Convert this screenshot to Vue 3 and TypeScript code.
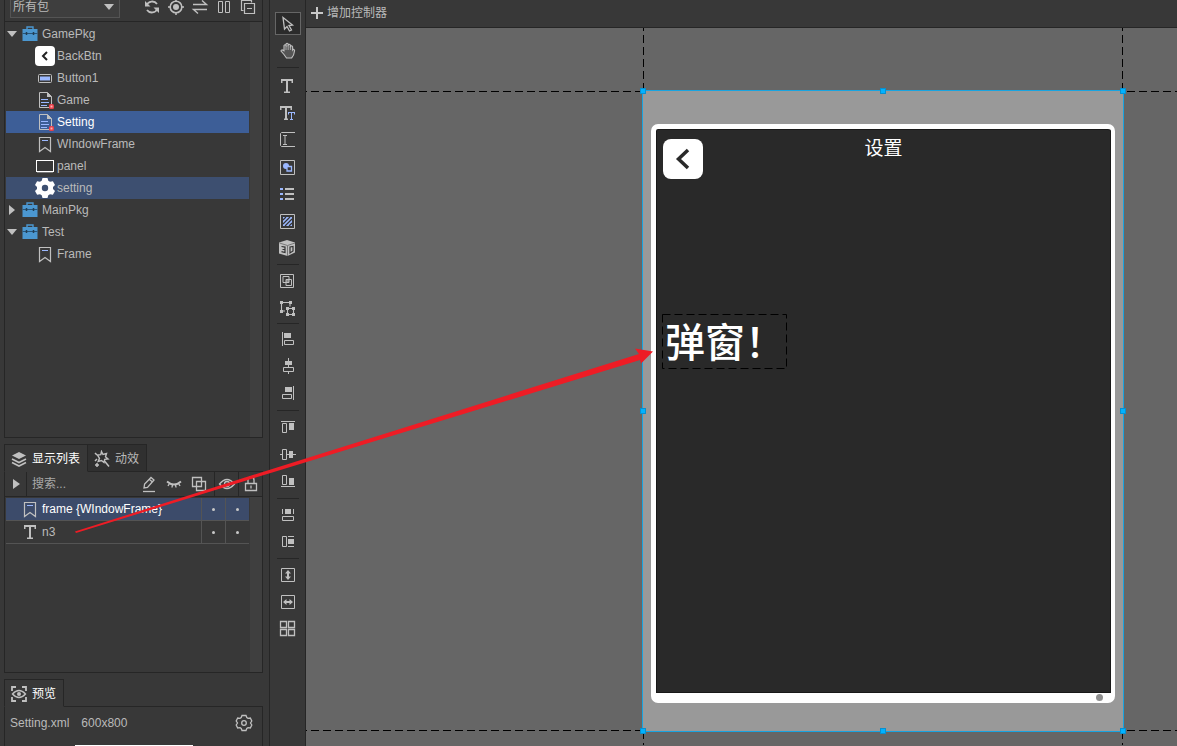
<script setup lang="ts">
import { ref } from 'vue'

interface TreeRow {
  label: string
  icon: string
  depth: number
  open?: boolean
  state?: 'selected' | 'related'
}
interface Tool {
  name: string
  art: string
}

const G = '#c0c0c0'
const B = '#9bb8ff'

const libraryActions: Tool[] = [
  { name: '刷新', art: `<path d="M3.500 7.500A6 6 0 0 1 14 6M14.500 10.500A6 6 0 0 1 4 12" fill="none" stroke="${G}" stroke-width="1.800"/><path d="M2 3v5.500h5.500zM16 15V9.500h-5.500z" fill="${G}"/>` },
  { name: '定位', art: `<circle cx="9" cy="9" r="5.800" fill="none" stroke="${G}" stroke-width="1.600"/><circle cx="9" cy="9" r="3" fill="${G}"/><path d="M9 1v3M9 14v3M1 9h3M14 9h3" stroke="${G}" stroke-width="1.500"/>` },
  { name: '切换', art: `<path d="M2 6.500h13.500L11 2.500M16 11.500H2.500L7 15.500" fill="none" stroke="${G}" stroke-width="1.400"/>` },
  { name: '分栏', art: `<path d="M3.500 3.500h4v11h-4zM10.500 3.500h4v11h-4z" fill="none" stroke="${G}"/>` },
  { name: '全部折叠', art: `<path d="M4.500 12.500h-2v-10h10v2M5.500 5.500h10v10h-10zM8 10.500h5" fill="none" stroke="${G}" stroke-width="1.200"/>` },
]

const rowArt: Record<string, string> = {
  pkg: `<path d="M7 5V3h6v2" fill="none" stroke="#4b97d0" stroke-width="1.400"/><path d="M2.500 5h15v12h-15z" fill="#4b97d0"/><path d="M2.500 9.500h15" stroke="#29567a"/><path d="M6.500 8v3M13.500 8v3" stroke="#223f55" stroke-width="1.500"/>`,
  back: `<rect width="20" height="20" rx="4" fill="#fff"/><path d="M12 6L8 10l4 4" fill="none" stroke="#222" stroke-width="2"/>`,
  button: `<rect x="3.500" y="6.500" width="13" height="8" rx="1" fill="none" stroke="${G}"/><path d="M5 8.500h10v4H5z" fill="${B}"/>`,
  doc: `<path d="M4.500 2.500h8l4 4v11h-12z" fill="none" stroke="${G}"/><path d="M12 2v5h5z" fill="${G}"/><path d="M6 9.500h7M6 12.500h8M6 15.500h6" stroke="${B}"/><rect x="14" y="14" width="5" height="5" rx="1.500" fill="#e8414b"/><path d="M15.500 15.500h2v2h-2z" fill="#ffb0b0"/>`,
  mark: `<path d="M4.500 3.500h11v14L10 13.500 4.500 17.500z" fill="none" stroke="${G}" stroke-width="1.200"/><path d="M7 6.500h6" stroke="${B}"/>`,
  panel: `<rect x="1.500" y="4.500" width="17" height="11" fill="none" stroke="#fff"/><path d="M2 16.500h16" stroke="#777"/>`,
  gear: `<path d="M7.500 0h5l.8 2.800 1.700 1 2.900-.6L20 7l-2 2.100v1.800L20 13l-2.100 3.800-2.900-.6-1.700 1-.8 2.800h-5l-.8-2.800-1.700-1-2.900.6L0 13l2-2.100V9.100L0 7l2.100-3.800 2.900.6 1.700-1zM10 6.800a3.200 3.200 0 1 0 0 6.400 3.200 3.200 0 0 0 0-6.400z" fill="#fff" fill-rule="evenodd"/>`,
  text: `<path d="M4 3h12v4h-1.500V5H11v10.500h2V17H7v-1.500h2V5H5.500v2H4z" fill="${G}"/>`,
}

const tree = ref<TreeRow[]>([
  { label: 'GamePkg', icon: 'pkg', depth: 0, open: true },
  { label: 'BackBtn', icon: 'back', depth: 1 },
  { label: 'Button1', icon: 'button', depth: 1 },
  { label: 'Game', icon: 'doc', depth: 1 },
  { label: 'Setting', icon: 'doc', depth: 1, state: 'selected' },
  { label: 'WIndowFrame', icon: 'mark', depth: 1 },
  { label: 'panel', icon: 'panel', depth: 1 },
  { label: 'setting', icon: 'gear', depth: 1, state: 'related' },
  { label: 'MainPkg', icon: 'pkg', depth: 0, open: false },
  { label: 'Test', icon: 'pkg', depth: 0, open: true },
  { label: 'Frame', icon: 'mark', depth: 1 },
])

const displayList = [
  { label: 'frame {WIndowFrame}', icon: 'mark', selected: true },
  { label: 'n3', icon: 'text', selected: false },
]

const listActions: Tool[] = [
  { name: '编辑', art: `<path d="M4 13l.6-4L11 2.500l3 2.500-6.500 7.500zM9.500 4.500l3 2.500" fill="none" stroke="${G}" stroke-width="1.300"/><path d="M3 16.500h12" stroke="${G}" stroke-width="1.300"/>` },
  { name: '隐藏', art: `<path d="M2 6.500q7 6 14 0" fill="none" stroke="${G}" stroke-width="1.800"/><path d="M4.500 8.500L3 11M7.500 9.500L7 12.500M10.500 9.500l.5 3M13.500 8.500L15 11" stroke="${G}" stroke-width="1.400"/>` },
  { name: '层叠', art: `<path d="M2.500 2.500h9v9h-9zM6.500 6.500h9v9h-9z" fill="none" stroke="${G}" stroke-width="1.300"/>` },
]
const eyeArt = `<path d="M1.500 9q7.500-9 15 0q-7.500 9-15 0z" fill="none" stroke="${G}" stroke-width="1.300"/><circle cx="9" cy="9" r="2.500" fill="none" stroke="${G}" stroke-width="1.300"/>`
const lockArt = `<path d="M3.500 8.500h11v7h-11zM6 8.500V5a3 3 0 0 1 6 0v3.500M9 10.500v3" fill="none" stroke="${G}" stroke-width="1.300"/>`

const toolGroups: { gap: string; tools: Tool[] }[] = [
  { gap: 'first', tools: [
    { name: '选择', art: `<path d="M5 4.500l9.500 7.500-3.500.5 2.500 4.500-2 1-2.500-4.500-2.500 2.500z" fill="none" stroke="${G}" stroke-width="1.300"/>` },
    { name: '移动画布', art: `<path d="M6 14.500L3 11q0-2 3-.3V5.500q1-1.500 2 0V4q1-1.500 2.200 0v1q1-1.500 2.200 0v1.500q1-1.500 2.200.3V10q1-1.500 2 .5-.5 5-3 7.500H8.500z" fill="#555" stroke="${G}" stroke-width="1.100"/><path d="M8 5.500V10M10.200 5v5M12.400 6v4" stroke="${G}" stroke-width=".8"/>` },
  ] },
  { gap: 'wide', tools: [
    { name: '文本', art: `<path d="M3 3h12v4h-1.500V5H10v10.500h2V17H6v-1.500h2V5H4.500v2H3z" fill="${G}"/>` },
    { name: '富文本', art: `<path d="M2 3h12v4h-1.500V5H9v10.500h1V17H6v-1.500h1V5H3.500v2H2z" fill="${G}"/><path d="M10 9h7v2.500h-1V10h-2v6h1v1h-3v-1h1v-6h-2v1.500h-1z" fill="${B}"/>` },
    { name: '输入文本', art: `<path d="M17 2.500H3.500L2.500 3.500v12l1 1H17" fill="none" stroke="${G}"/><path d="M5 5.500h4M7 5.500v9M5 14.500h4" stroke="${G}"/>` },
    { name: '图形', art: `<path d="M2.500 3.500h14v14h-14z" fill="none" stroke="${G}"/><circle cx="8" cy="9" r="3" fill="${B}"/><path d="M9 9.500h4.500V14H9z" fill="#383838" stroke="${B}" stroke-width="1.300"/>` },
    { name: '列表', art: `<path d="M2 5h3M2 10h3M2 15h3" stroke="${B}" stroke-width="2"/><path d="M7 5h9M7 10h9M7 15h9" stroke="${G}" stroke-width="2"/>` },
    { name: '装载器', art: `<path d="M2.500 3.500h14v14h-14z" fill="none" stroke="${G}"/><path d="M5 6h9v9H5z" fill="${B}"/><path d="M5 9l3-3M5 13l7-7M7 15l7-7M11 15l3-3" stroke="#333" stroke-width="1.200"/>` },
    { name: '3D 装载器', art: `<path d="M1 4.500L9 2l8 2.500v10L9.500 18 1 15.500z" fill="${G}"/><path d="M1.500 5l8 2.500L17 5M9.500 7.500V18" fill="none" stroke="#777"/><path d="M3.500 8.500l3.500.6v5.400l-3.500-.8M4.500 11.500H7M12 9v6l3-2V8.500z" fill="none" stroke="#333" stroke-width="1.200"/>` },
  ] },
  { gap: 'snug', tools: [
    { name: '组合', art: `<path d="M2.500 3.500h13v13h-13z" fill="none" stroke="${G}"/><path d="M8 8h3v4H8z" fill="#888"/><path d="M5 5.500h6v6H5zM8 8.500h5.500v6H8z" fill="none" stroke="${G}"/>` },
    { name: '转换为组件', art: `<path d="M3.500 4.500h9M3.500 4.500v9M12 4.500v4M3.500 13H7M9.500 10.500h6v6h-6z" fill="none" stroke="${G}" stroke-width="1.100"/><path d="M2 3h3v3H2zM11 3h3v3h-3zM2 12h3v3H2zM8 9h3v3H8zM14 9h3v3h-3zM8 15h3v3H8zM14 15h3v3h-3z" fill="${G}"/>` },
  ] },
  { gap: 'tight', tools: [
    { name: '左对齐', art: `<path d="M4 3h1v14H4zM6 4h7v5H6z" fill="${G}"/><path d="M6.500 11.500h9v4h-9z" fill="none" stroke="${G}"/>` },
    { name: '水平居中', art: `<path d="M10 2h1v9h-1zM10 16h1v2h-1zM7 5h7v4H7z" fill="${G}"/><path d="M5.500 11.500h10v4h-10z" fill="none" stroke="${G}"/>` },
    { name: '右对齐', art: `<path d="M15 3h1v14h-1zM7 4h7v5H7z" fill="${G}"/><path d="M4.500 11.500h9v4h-9z" fill="none" stroke="${G}"/>` },
  ] },
  { gap: 'even', tools: [
    { name: '顶对齐', art: `<path d="M3 4h14v1H3zM11 6h5v7h-5z" fill="${G}"/><path d="M4.500 6.500h4v9h-4z" fill="none" stroke="${G}"/>` },
    { name: '垂直居中', art: `<path d="M2 10h2v1H2zM9 10h9v1H9zM11 7h4v7h-4z" fill="${G}"/><path d="M4.500 5.500h4v10h-4z" fill="none" stroke="${G}"/>` },
    { name: '底对齐', art: `<path d="M3 15h14v1H3zM11 7h5v7h-5z" fill="${G}"/><path d="M4.500 4.500h4v9h-4z" fill="none" stroke="${G}"/>` },
  ] },
  { gap: 'even', tools: [
    { name: '等宽', art: `<path d="M4 4h1v5H4zM15 4h1v5h-1zM7 4h6v5H7z" fill="${G}"/><path d="M4.500 11.500h11v4h-11z" fill="none" stroke="${G}"/>` },
    { name: '等高', art: `<path d="M10 4h6v1h-6zM10 14h6v1h-6zM10 7h6v5h-6z" fill="${G}"/><path d="M4.500 4.500h4v10h-4z" fill="none" stroke="${G}"/>` },
  ] },
  { gap: 'snug', tools: [
    { name: '垂直拉伸', art: `<path d="M3.500 3.500h13v13h-13z" fill="none" stroke="${G}"/><path d="M10 5l3 3.500h-2v3h2L10 15l-3-3.500h2v-3H7z" fill="${G}"/>` },
    { name: '水平拉伸', art: `<path d="M3.500 3.500h13v13h-13z" fill="none" stroke="${G}"/><path d="M5 10l3.500-3v2h3V7l3.500 3-3.500 3v-2h-3v2z" fill="${G}"/>` },
    { name: '网格排列', art: `<path d="M2.500 2.500h6v6h-6zM10.500 2.500h6v6h-6zM2.500 10.500h6v6h-6zM10.500 10.500h6v6h-6z" fill="none" stroke="${G}" stroke-width="1.300"/>` },
  ] },
]

const handles = ['nw', 'n', 'ne', 'w', 'e', 'sw', 's', 'se']
const activeTool = ref('选择')
const search = ref('')
</script>

<template>
  <div class="editor">
    <aside class="sidebar">
      <section class="box library">
        <div class="library-bar">
          <label class="picker">
            <select aria-label="包">
              <option>所有包</option>
            </select>
            <svg width="10" height="6" viewBox="0 0 10 6"><path d="M0 0h10L5 6z" fill="#c0c0c0" /></svg>
          </label>
          <div class="library-actions">
            <button v-for="a in libraryActions" :key="a.name" :aria-label="a.name">
              <svg width="18" height="18" viewBox="0 0 18 18" v-html="a.art" />
            </button>
          </div>
        </div>
        <div class="scroller">
          <ul class="rows">
            <li v-for="row in tree" :key="row.label">
              <button class="tree-row" :class="[row.state, { child: row.depth > 0 }]">
                <span v-if="row.depth === 0" class="twist">
                  <svg width="10" height="10" viewBox="0 0 10 10">
                    <path :d="row.open ? 'M0 2h10L5 8z' : 'M2 0l6 5-6 5z'" fill="#c0c0c0" />
                  </svg>
                </span>
                <svg class="row-icon" width="20" height="20" viewBox="0 0 20 20" v-html="rowArt[row.icon]" />
                <span>{{ row.label }}</span>
              </button>
            </li>
          </ul>
          <div class="track" />
        </div>
      </section>

      <section class="dock">
        <div class="tabs">
          <button class="tab active">
            <svg width="18" height="18" viewBox="0 0 18 18">
              <path d="M9 2l7 3.500L9 9 2 5.500z" fill="#c0c0c0" />
              <path d="M2 9l7 3.500L16 9M2 12.500L9 16l7-3.500" fill="none" stroke="#c0c0c0" stroke-width="1.600" />
            </svg>
            <span>显示列表</span>
          </button>
          <button class="tab">
            <svg width="18" height="18" viewBox="0 0 18 18">
              <path d="M8.500 1.500l1.500 3 3.500-1-1 3.300 2.500 2.200-3.300.4-.7 3.100-2.500-2-3.300 1 1.300-3.200L4.500 5l3.300-.3z" fill="none" stroke="#c0c0c0" stroke-width="1.400" />
              <path d="M11.500 11l4.500 5.500M2 3l2 2M4 9l-2 2M4 13v4M2 15h4" stroke="#c0c0c0" stroke-width="1.500" />
            </svg>
            <span>动效</span>
          </button>
        </div>
        <div class="box display">
          <div class="search-bar">
            <button class="expand" aria-label="展开">
              <svg width="8" height="10" viewBox="0 0 8 10"><path d="M1 0l7 5-7 5z" fill="#c0c0c0" /></svg>
            </button>
            <input v-model="search" type="text" aria-label="搜索" placeholder="搜索..." />
            <div class="acts">
              <button v-for="a in listActions" :key="a.name" class="act" :aria-label="a.name">
                <svg width="18" height="18" viewBox="0 0 18 18" v-html="a.art" />
              </button>
            </div>
            <button class="act ruled" aria-label="可见"><svg width="18" height="18" viewBox="0 0 18 18" v-html="eyeArt" /></button>
            <button class="act ruled" aria-label="锁定"><svg width="18" height="18" viewBox="0 0 18 18" v-html="lockArt" /></button>
          </div>
          <div class="scroller">
            <ul class="rows">
              <li v-for="item in displayList" :key="item.label" class="item" :class="{ picked: item.selected }">
                <button class="item-name">
                  <svg width="20" height="20" viewBox="0 0 20 20" v-html="rowArt[item.icon]" />
                  <span>{{ item.label }}</span>
                </button>
                <button class="dot" aria-label="可见"><i /></button>
                <button class="dot" aria-label="锁定"><i /></button>
              </li>
            </ul>
            <div class="track" />
          </div>
        </div>
      </section>

      <section class="dock preview">
        <div class="tabs">
          <button class="tab active">
            <svg width="18" height="18" viewBox="0 0 18 18">
              <path d="M2 6V2h4M12 2h4v4M16 12v4h-4M6 16H2v-4" fill="none" stroke="#c0c0c0" stroke-width="1.800" />
              <path d="M2.500 9q6.500-7 13 0q-6.500 7-13 0z" fill="none" stroke="#c0c0c0" stroke-width="1.400" />
              <circle cx="9" cy="9" r="2" fill="#c0c0c0" />
            </svg>
            <span>预览</span>
          </button>
        </div>
        <div class="box preview-body">
          <div class="info">
            <span>Setting.xml</span>
            <span>600x800</span>
            <button aria-label="预览设置">
              <svg width="18" height="18" viewBox="0 0 18 18">
                <path d="M7 1.500h4l.8 2 1.200.8 2.300-.3 1.500 3L15.500 9l1.300 2-1.500 3-2.300-.3-1.200.8-.8 2H7l-.8-2-1.200-.8-2.300.3-1.500-3L2.500 9 1.200 7l1.500-3 2.300.3 1.200-.8z" fill="none" stroke="#c0c0c0" stroke-width="1.300" />
                <circle cx="9" cy="9" r="2.300" fill="none" stroke="#c0c0c0" stroke-width="1.300" />
              </svg>
            </button>
          </div>
          <div class="thumb" />
        </div>
      </section>
    </aside>

    <nav class="tools">
      <div v-for="(g, i) in toolGroups" :key="i" class="tool-group" :class="g.gap">
        <hr v-if="i > 0" />
        <button
          v-for="t in g.tools"
          :key="t.name"
          class="tool"
          :class="{ on: activeTool === t.name }"
          :aria-label="t.name"
          @click="activeTool = t.name"
        >
          <svg width="20" height="21" viewBox="0 0 20 21" v-html="t.art" />
        </button>
      </div>
    </nav>

    <main class="work">
      <header class="controllers">
        <button>
          <svg width="12" height="12" viewBox="0 0 12 12"><path d="M6 0v12M0 6h12" stroke="#c8c8c8" stroke-width="2" /></svg>
          <span>增加控制器</span>
        </button>
      </header>
      <div class="canvas">
        <svg class="guides" width="100%" height="100%">
          <g stroke="#000" stroke-dasharray="8 4">
            <path d="M0 64.500H4000M0 703.500H4000" stroke-dashoffset="7" fill="none" />
            <path d="M337.500 0V3000M816.500 0V3000" stroke-dashoffset="4" fill="none" />
          </g>
        </svg>
        <div class="stage">
          <div class="window-frame">
            <button class="back" aria-label="返回">
              <svg width="40" height="40" viewBox="0 0 40 40"><path d="M25 11L15.500 20 25 29" fill="none" stroke="#292929" stroke-width="3.500" /></svg>
            </button>
            <h1>设置</h1>
            <i class="knob" />
          </div>
          <div class="node">
            <svg class="node-edge" width="125" height="55" viewBox="0 0 125 55">
              <rect x=".5" y=".5" width="124" height="54" fill="none" stroke="#000" stroke-dasharray="8 4" />
            </svg>
            <span>弹窗！</span>
          </div>
          <i v-for="h in handles" :key="h" class="handle" :class="h" />
        </div>
      </div>
    </main>

    <svg class="pointer-line" width="660" height="540" viewBox="0 0 660 540">
      <path d="M75 531.500L269 470L639 354 635 348.500 653 351.500 641 363.500 640 360 269 473.500 76 533z" fill="#ee1c25" />
    </svg>
  </div>
</template>

<style>
body {
  background: #383838;
}
</style>

<style scoped>
.editor {
  position: relative;
  display: flex;
  height: 100vh;
  overflow: hidden;
  background: #383838;
  color: #bababa;
  font: 12px/16px "Liberation Sans", "Noto Sans CJK SC", sans-serif;
}
.editor * {
  box-sizing: border-box;
}
button,
input,
select {
  margin: 0;
  padding: 0;
  border: 0;
  background: none;
  color: inherit;
  font: inherit;
}
svg {
  display: block;
  flex: none;
}
ul {
  margin: 0;
  padding: 0;
  list-style: none;
}
.sidebar {
  flex: 0 0 270px;
  min-width: 0;
  display: grid;
  grid-template-columns: minmax(0, 1fr);
  grid-template-rows: minmax(0, 438fr) minmax(0, 229fr) 67px;
  gap: 6px;
  padding: 0 6px 0 4px;
  border-right: 1px solid #262626;
}
.box {
  display: flex;
  flex-direction: column;
  min-height: 0;
  border: 1px solid #262626;
}
.library {
  border-top: 0;
}
.library-bar {
  flex: 0 0 22px;
  display: flex;
  align-items: flex-end;
  justify-content: space-between;
  min-height: 0;
  padding: 0 2px 3px 5px;
  border-bottom: 1px solid #262626;
}
.picker {
  display: flex;
  align-items: center;
  width: 110px;
  height: 22px;
  border: 1px solid #545454;
  background: #3e3e3e;
}
.picker select {
  flex: 1;
  height: 20px;
  padding-left: 2px;
  appearance: none;
  outline: 0;
}
.picker svg {
  margin-right: 5px;
}
.library-actions {
  display: flex;
}
.library-actions button {
  padding: 0 3px 2px;
}
.scroller {
  flex: 1;
  display: flex;
  min-height: 0;
}
.rows {
  flex: 1;
  min-width: 0;
  padding: 1px 1px 0;
}
.track {
  width: 12px;
  background: #3f3f3f;
}
.tree-row {
  display: flex;
  align-items: center;
  width: 100%;
  height: 22px;
  text-align: left;
}
.tree-row.child {
  padding-left: 29px;
}
.row-icon {
  margin-right: 2px;
}
.twist {
  width: 14px;
  padding-left: 1px;
}
.tree-row.selected {
  background: #3d5e97;
  color: #fff;
}
.tree-row.related {
  background: #3d4f70;
}
.dock {
  display: flex;
  flex-direction: column;
  min-height: 0;
}
.dock > .box {
  flex: 1;
}
.tabs {
  display: flex;
  height: 28px;
  margin-bottom: -1px;
}
.tab {
  display: flex;
  align-items: center;
  gap: 4px;
  padding: 2px 7px 0 5px;
  border: 1px solid #262626;
  background: #303030;
}
.tab + .tab {
  border-left: 0;
}
.tab.active {
  border-bottom-color: #383838;
  background: #383838;
  color: #fff;
  z-index: 1;
}
.search-bar {
  flex: 0 0 25px;
  display: flex;
  align-items: stretch;
  border-bottom: 1px solid #262626;
}
.expand {
  display: flex;
  align-items: center;
  justify-content: center;
  width: 22px;
  border-right: 1px solid #262626;
}
.search-bar input {
  flex: 1;
  min-width: 0;
  padding-left: 5px;
  outline: 0;
}
.search-bar input::placeholder {
  color: #a8a8a8;
  opacity: 1;
}
.acts {
  display: flex;
  padding-right: 3px;
}
.act {
  display: flex;
  align-items: center;
  justify-content: center;
  width: 25px;
}
.ruled {
  width: 24px;
  border-left: 1px solid #262626;
}
.item {
  display: flex;
  height: 23px;
  border-bottom: 1px solid #545454;
}
.item.picked {
  background: #3c4b6a;
  color: #fff;
}
.item-name {
  flex: 1;
  display: flex;
  align-items: center;
  gap: 2px;
  padding-left: 14px;
  text-align: left;
  white-space: nowrap;
}
.dot {
  display: flex;
  align-items: center;
  justify-content: center;
  width: 24px;
  border-left: 1px solid #545454;
}
.dot i {
  width: 3px;
  height: 3px;
  border-radius: 50%;
  background: #c8c8c8;
}
.preview-body {
  justify-content: space-between;
  border-bottom: 0;
}
.info {
  display: flex;
  align-items: center;
  gap: 12px;
  height: 32px;
  padding: 0 9px 0 5px;
}
.info button {
  margin-left: auto;
}
.thumb {
  width: 118px;
  height: 1px;
  margin-left: 70px;
  background: #fff;
}
.tools {
  flex: 0 0 36px;
  padding: 10px 0 0 1px;
  border-right: 1px solid #262626;
}
.tool-group {
  display: flex;
  flex-direction: column;
  align-items: center;
}
.tool-group hr {
  width: 22px;
  height: 1px;
  margin: 3px 0;
  border: 0;
  background: #262626;
}
.tool-group.wide hr {
  margin-bottom: 5px;
}
.tool-group.snug hr {
  margin-top: 2px;
}
.tool-group.tight hr {
  margin: 1px 0 2px;
}
.tool {
  display: flex;
  align-items: center;
  justify-content: center;
  width: 26px;
  height: 27px;
}
.tool.on {
  height: 23px;
  margin: 2px 0;
  border: 1px solid #666;
  background: #2b2b2b;
}
.work {
  flex: 1;
  display: flex;
  flex-direction: column;
  min-width: 0;
}
.controllers {
  flex: 0 0 28px;
  padding-left: 5px;
  border-bottom: 1px solid #262626;
}
.controllers button {
  display: flex;
  align-items: center;
  gap: 4px;
  height: 26px;
}
.canvas {
  position: relative;
  flex: 1;
  margin-top: -1px;
  overflow: hidden;
  border-top: 1px solid #262626;
  background: #666;
}
.guides {
  position: absolute;
  top: -1px;
  left: 0;
}
.stage {
  position: absolute;
  top: 63px;
  left: 337px;
  width: 480px;
  height: 640px;
  padding: 33px 8px 28px;
  outline: 1px solid #18a4e0;
  background: #999;
}
.window-frame {
  position: relative;
  display: grid;
  grid-template-columns: 1fr auto 1fr;
  align-items: start;
  height: 100%;
  padding: 10px 7px;
  border: 5px solid #fff;
  border-right-width: 4px;
  border-bottom-width: 10px;
  border-radius: 7px;
  background: #292929;
  box-shadow: inset 0 0 0 1px #181818;
}
.back {
  width: 40px;
  height: 40px;
  border-radius: 8px;
  background: #fff;
}
.window-frame h1 {
  margin: 0;
  color: #fff;
  font: 400 19px/16px "Noto Sans CJK SC", sans-serif;
}
.knob {
  position: absolute;
  right: 8px;
  bottom: -8px;
  width: 7px;
  height: 7px;
  border-radius: 50%;
  background: #8f8f8f;
}
.node {
  position: absolute;
  top: 223px;
  left: 19px;
  width: 125px;
  height: 55px;
  padding-left: 3px;
  color: #fff;
  font: 500 40px/52px "Noto Sans CJK SC", sans-serif;
  white-space: nowrap;
}
.node-edge {
  position: absolute;
  top: 0;
  left: 0;
}
.handle {
  position: absolute;
  top: calc(50% - 3px);
  left: calc(50% - 3px);
  width: 6px;
  height: 6px;
  border: 1px solid #0890cf;
  background: #00b2ff;
}
.nw, .n, .ne { top: -3px; }
.sw, .s, .se { top: calc(100% - 3px); }
.nw, .w, .sw { left: -3px; }
.ne, .e, .se { left: calc(100% - 3px); }
.pointer-line {
  position: absolute;
  top: 0;
  left: 0;
  pointer-events: none;
}
</style>
